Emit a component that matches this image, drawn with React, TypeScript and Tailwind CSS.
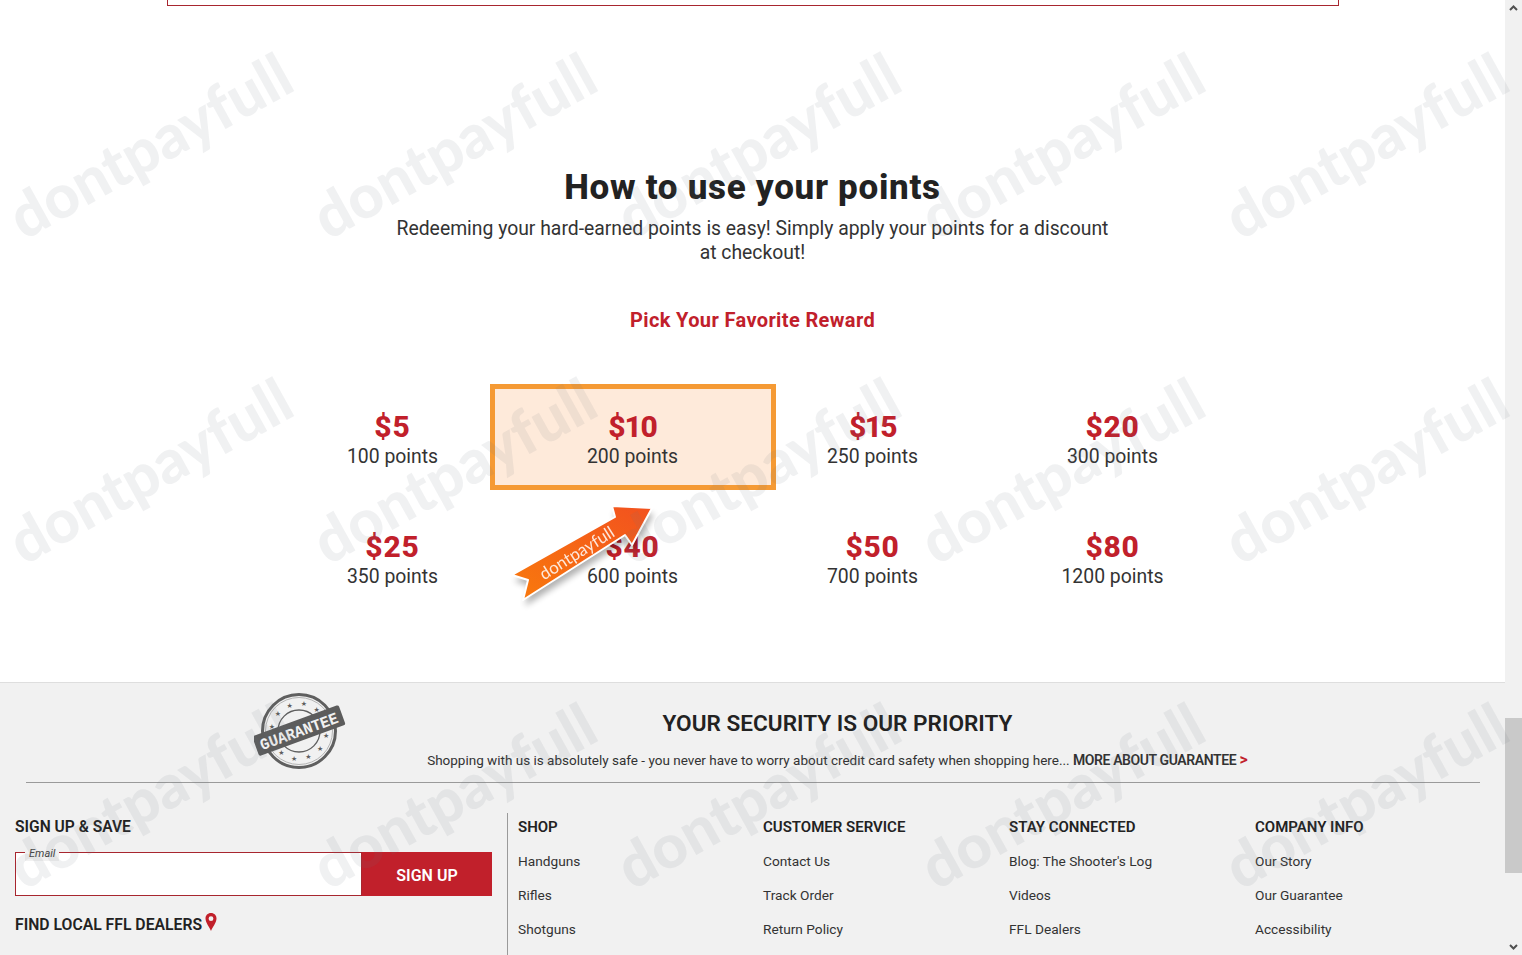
import React from "react";

const rewards = [
  ["$5", "100 points", "tracking-[1px]"],
  ["$10", "200 points", "tracking-[-1.2px]"],
  ["$15", "250 points", "tracking-[-1.6px]"],
  ["$20", "300 points", "tracking-[0.7px]"],
  ["$25", "350 points", "tracking-[0.8px]"],
  ["$40", "600 points", "tracking-[0.7px]"],
  ["$50", "700 points", "tracking-[0.7px]"],
  ["$80", "1200 points", "tracking-[0.7px]"],
];

const columns = [
  { title: "SHOP", items: ["Handguns", "Rifles", "Shotguns"], w: "w-[245px]" },
  { title: "CUSTOMER SERVICE", items: ["Contact Us", "Track Order", "Return Policy"], w: "w-[246px]" },
  { title: "STAY CONNECTED", items: ["Blog: The Shooter's Log", "Videos", "FFL Dealers"], w: "w-[246px]" },
  { title: "COMPANY INFO", items: ["Our Story", "Our Guarantee", "Accessibility"], w: "w-[200px]" },
];

function Badge() {
  const stars = [-150, -120, -90, -60, -30, 30, 60, 90, 120, 150];
  return (
    <svg width="92" height="80" viewBox="0 0 92 80" className="block">
      <circle cx="45" cy="39" r="36.5" fill="#f1f1f1" stroke="#5f5f5f" strokeWidth="3" />
      <circle cx="45" cy="39" r="33.5" fill="none" stroke="#a5a5a5" strokeWidth="0.8" />
      <circle cx="45" cy="39" r="21" fill="none" stroke="#5f5f5f" strokeWidth="1.3" />
      {stars.map((a, i) => (
        <text
          key={i}
          x={45 + 27.5 * Math.cos(((a - 20) * Math.PI) / 180)}
          y={41.5 + 27.5 * Math.sin(((a - 20) * Math.PI) / 180)}
          textAnchor="middle"
          fontSize="7"
          fill="#5f5f5f"
          fontFamily="'DejaVu Sans', sans-serif"
        >
          ★
        </text>
      ))}
      <g transform="rotate(-20 45 39)">
        <rect x="-1" y="28" width="92" height="21" rx="2" fill="#5c5c5c" />
        <text
          x="45"
          y="44.5"
          textAnchor="middle"
          fill="#f1f1f1"
          fontSize="16"
          fontWeight="700"
          fontFamily="'Liberation Mono', monospace"
          textLength="82"
          lengthAdjust="spacingAndGlyphs"
        >
          GUARANTEE
        </text>
      </g>
    </svg>
  );
}

function Arrow() {
  return (
    <svg width="170" height="120" viewBox="0 0 170 120" className="absolute top-[498px] left-[500px] block">
      <defs>
        <linearGradient id="arrowFill" x1="0" y1="1" x2="1" y2="0">
          <stop offset="0" stopColor="#f97a0c" />
          <stop offset="1" stopColor="#f2511f" />
        </linearGradient>
      </defs>
      <path
        d="M12 77 L115 19 L112 8 L152 10 L132 47 L125 37 L23 102 L28 82 Z"
        fill="#000"
        opacity="0.3"
        transform="translate(2 6)"
        style={{ filter: "blur(3px)" }}
      />
      <path
        d="M12 77 L115 19 L112 8 L152 10 L132 47 L125 37 L23 102 L28 82 Z"
        fill="url(#arrowFill)"
        stroke="#fff"
        strokeWidth="2"
        strokeLinejoin="round"
      />
      <text
        x="80"
        y="60"
        transform="rotate(-32 80 60)"
        textAnchor="middle"
        fill="#fff"
        opacity="0.85"
        fontSize="17"
        fontFamily="Lato, sans-serif"
      >
        dontpayfull
      </text>
    </svg>
  );
}

export default function App() {
  const marks = Array.from({ length: 15 });
  return (
    <div className="relative flex h-[955px] w-full overflow-hidden bg-white font-['Roboto',sans-serif] text-[#222222]">
      <main className="flex w-[1505px] shrink-0 flex-col">
        <div className="ml-[167px] h-[6px] w-[1172px] border-x border-b border-[#a8262f]" />

        <section className="flex h-[676px] flex-col items-center">
          <h1 className="mt-[160px] text-[35px] leading-[44px] font-extrabold tracking-[0.7px] text-[#222222]">
            How to use your points
          </h1>
          <p className="mt-[7px] w-[730px] text-center text-[19.35px] leading-[24px] text-[#333333]">
            Redeeming your hard-earned points is easy! Simply apply your points for a discount at checkout!
          </p>
          <h2 className="mt-[40px] text-[20px] leading-[30px] font-bold tracking-[0.37px] text-[#c1202b]">
            Pick Your Favorite Reward
          </h2>
          <div className="mt-[52px] grid w-[960px] grid-cols-4 gap-y-[20px]">
            {rewards.map(([price, pts, track], i) => (
              <div
                key={price}
                className={
                  i === 1
                    ? "-mx-[23px] -my-[3px] flex h-[106px] flex-col items-center justify-center border-[5px] border-[#f59a34] bg-[#feeada] pt-[4px]"
                    : "flex h-[100px] flex-col items-center justify-center pt-[4px]"
                }
              >
                <div className={"text-[30px] leading-[36px] font-extrabold text-[#c1202b] " + track}>{price}</div>
                <div className="text-[19.4px] leading-[24px] text-[#333333]">{pts}</div>
              </div>
            ))}
          </div>
        </section>

        <footer className="flex flex-1 flex-col border-t border-[#dedede] bg-[#f1f1f1]">
          <div className="flex h-[99px] shrink-0">
            <div className="flex w-[346px] shrink-0 justify-end pt-[9px]">
              <Badge />
            </div>
            <div className="flex flex-1 flex-col items-center pr-[176px]">
              <h3 className="mt-[26px] whitespace-nowrap text-[22.6px] leading-[30px] font-semibold text-[#222222]">
                YOUR SECURITY IS OUR PRIORITY
              </h3>
              <p className="mt-[11px] whitespace-nowrap text-[13.5px] leading-[20px] text-[#333333]">
                Shopping with us is absolutely safe - you never have to worry about credit card safety when shopping
                here... <span className="text-[14px] font-semibold tracking-[-0.4px]">MORE ABOUT GUARANTEE</span>{" "}
                <span className="text-[16px] font-bold text-[#c1202b]">&gt;</span>
              </p>
            </div>
          </div>
          <div className="mr-[25px] ml-[26px] h-px shrink-0 bg-[#9a9a9a]" />
          <div className="flex flex-1 pt-[30px]">
            <div className="ml-[15px] w-[477px] shrink-0">
              <div className="mt-[4px] text-[15.6px] leading-[20px] font-semibold text-[#222222]">SIGN UP &amp; SAVE</div>
              <div className="relative mt-[15px] flex h-[44px]">
                <div className="flex-1 border border-[#a8262f] bg-white" />
                <span className="absolute -top-[5px] left-[10px] bg-[#f1f1f1] px-[4px] text-[11px] leading-[14px] text-[#444444] italic">
                  Email
                </span>
                <button className="w-[130px] bg-[#c1202b] pt-[3px] text-[16px] font-semibold text-white">SIGN UP</button>
              </div>
              <div className="mt-[17px] flex items-start">
                <span className="mt-[2px] text-[15.75px] leading-[20px] font-semibold text-[#222222]">
                  FIND LOCAL FFL DEALERS
                </span>
                <svg width="12" height="18" viewBox="0 0 12 18" className="ml-[3px] block">
                  <path
                    fillRule="evenodd"
                    d="M6 0C2.7 0 .5 2.4.5 5.6.5 9.6 4.6 14.6 6 18c1.4-3.4 5.5-8.4 5.5-12.4C11.5 2.4 9.3 0 6 0Zm0 3.3a2.4 2.4 0 1 1 0 4.8 2.4 2.4 0 0 1 0-4.8Z"
                    fill="#c1202b"
                  />
                </svg>
              </div>
            </div>
            <div className="ml-[15px] flex flex-1 border-l border-[#9a9a9a] pl-[10px]">
              {columns.map((c) => (
                <div key={c.title} className={c.w + " shrink-0"}>
                  <div className="mt-[4px] text-[15px] leading-[20px] font-semibold text-[#222222]">{c.title}</div>
                  <ul className="mt-[7px] flex flex-col">
                    {c.items.map((t) => (
                      <li key={t} className="h-[34px] text-[13.7px] leading-[34px] text-[#333333]">
                        {t}
                      </li>
                    ))}
                  </ul>
                </div>
              ))}
            </div>
          </div>
        </footer>
      </main>

      <aside className="relative flex w-[17px] shrink-0 flex-col items-center justify-between bg-[#f1f1f1] py-[5px]">
        <svg width="9" height="6" viewBox="0 0 9 6" className="block">
          <path d="M1 5 4.5 1.5 8 5" fill="none" stroke="#505050" strokeWidth="2" />
        </svg>
        <div className="absolute top-[718px] left-0 h-[155px] w-[17px] bg-[#c9c9c9]" />
        <svg width="9" height="6" viewBox="0 0 9 6" className="block">
          <path d="M1 1 4.5 4.5 8 1" fill="none" stroke="#505050" strokeWidth="2" />
        </svg>
      </aside>

      <Arrow />

      <div className="pointer-events-none absolute top-[-18px] left-[-3px] grid w-[1520px] auto-rows-[325px] grid-cols-5">
        {marks.map((_, i) => (
          <div key={i} className="flex w-[304px] items-center justify-center">
            <span className="-rotate-[29deg] whitespace-nowrap font-['Lato',sans-serif] text-[61px] leading-none font-black text-[#6b7280]/10">
              dontpayfull
            </span>
          </div>
        ))}
      </div>
    </div>
  );
}
